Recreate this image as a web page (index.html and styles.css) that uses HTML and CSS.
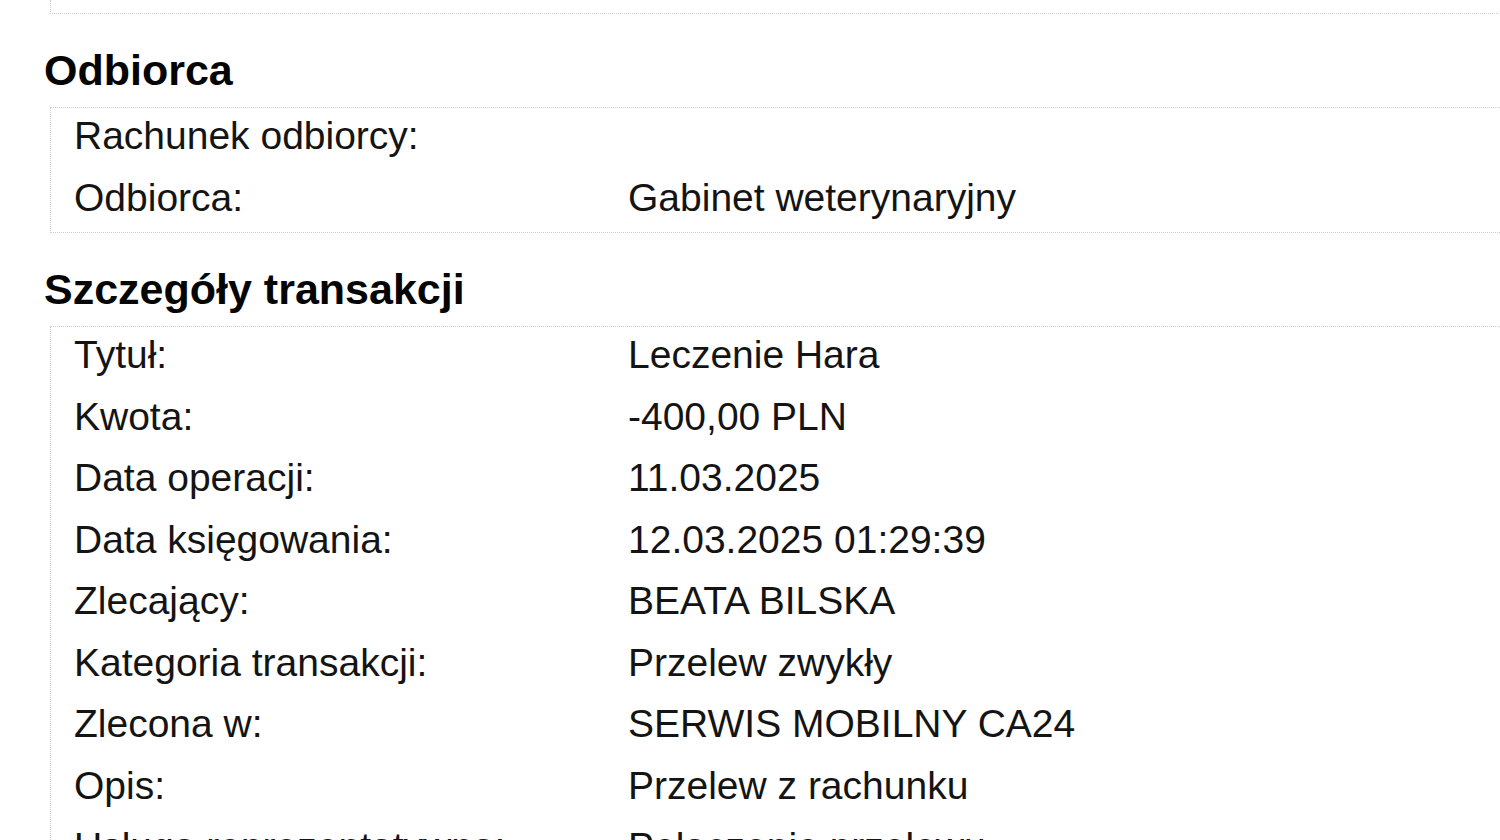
FILE: index.html
```html
<!DOCTYPE html>
<html lang="pl">
<head>
  <meta charset="UTF-8">
  <meta name="viewport" content="width=device-width, initial-scale=1.0">
  <title>Szczegóły transakcji</title>
  <link rel="stylesheet" href="styles.css">
</head>
<body>
  <div class="page">
    <div class="box box-prev"></div>

    <h2>Odbiorca</h2>
    <div class="box">
      <div class="fields">
        <div class="label">Rachunek odbiorcy:</div>
        <div class="value"></div>
        <div class="label">Odbiorca:</div>
        <div class="value">Gabinet weterynaryjny</div>
      </div>
    </div>

    <h2>Szczegóły transakcji</h2>
    <div class="box box-open">
      <div class="fields">
        <div class="label">Tytuł:</div>
        <div class="value">Leczenie Hara</div>
        <div class="label">Kwota:</div>
        <div class="value">-400,00 PLN</div>
        <div class="label">Data operacji:</div>
        <div class="value">11.03.2025</div>
        <div class="label">Data księgowania:</div>
        <div class="value">12.03.2025 01:29:39</div>
        <div class="label">Zlecający:</div>
        <div class="value">BEATA BILSKA</div>
        <div class="label">Kategoria transakcji:</div>
        <div class="value">Przelew zwykły</div>
        <div class="label">Zlecona w:</div>
        <div class="value">SERWIS MOBILNY CA24</div>
        <div class="label">Opis:</div>
        <div class="value">Przelew z rachunku</div>
        <div class="label">Usługa reprezentatywna:</div>
        <div class="value">Połączenie przelewu</div>
      </div>
    </div>
  </div>
</body>
</html>
```

FILE: styles.css
```css
body {
  margin: 0;
  background: #fff;
  color: #141414;
  font-family: 'Liberation Sans', Arial, sans-serif;
  overflow: hidden;
}
.page {
  padding-left: 44px;
  height: 840px;
  overflow: hidden;
}
h2 {
  margin: 0;
  padding: 31px 0 12px 0;
  font-size: 43px;
  line-height: 50px;
  font-weight: bold;
  color: #050505;
}
.box {
  margin-left: 6px;
  width: 1500px;
  border-top: 1px dotted #cfcfcf;
  border-left: 1px dotted #cfcfcf;
  border-bottom: 1px dotted #cfcfcf;
  padding: 0 0 4px 23px;
}
.box-prev {
  border-top: none;
  height: 13px;
  padding: 0;
}
.box-open {
  border-bottom: none;
  padding-top: 0;
}
.fields {
  display: grid;
  grid-template-columns: 554px 1fr;
  margin-top: -3px;
  font-size: 39px;
  line-height: 61.5px;
}
.label, .value {
  white-space: nowrap;
  min-height: 61.5px;
}
```
